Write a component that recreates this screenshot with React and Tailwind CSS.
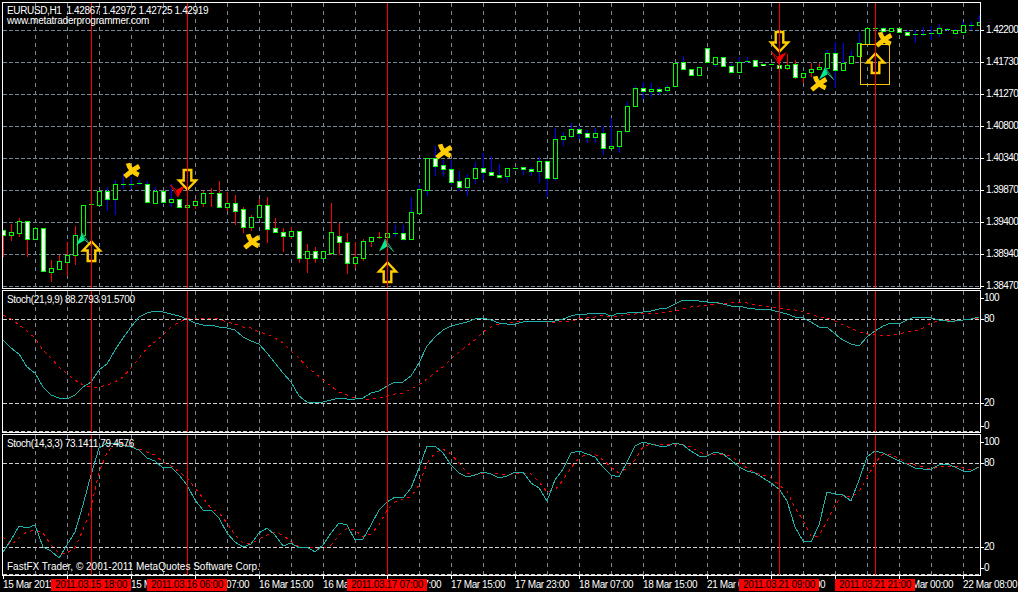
const K = [
[1,690,704,690,770],[0,697,704,672,722],[0,664,698,655,710],[1,664,716,664,770],[0,685,716],[1,685,812],[0,805,815,780,845],[0,784,806,765,808],[0,766,785,727,827],[0,706,766,678,795],
[0,616,706],[2,613,613],[0,574,614],[1,574,596,562,632],[0,553,596,540,644],[2,553,553,520,568],[2,551,551,530,566],[2,550,550,540,556],[1,553,605,543,607],[0,574,608,562,610],
[1,574,605,574,612],[0,596,605,553,622],[1,596,622],[0,616,622],[0,604,616,598,626],[0,580,608,574,622],[2,580,580,565,620],[1,580,620,544,625],[0,610,622,576,632],[1,610,632,586,674],
[1,628,682,622,698],[0,652,682,645,692],[0,616,652,598,655],[1,616,686,592,728],[1,685,697,655,700],[1,697,709,685,755],[0,694,709,682,716],[1,694,775,694,790],[0,754,775,732,820],[1,754,775,740,788],
[0,754,775,754,778],[0,697,759,610,765],[1,709,727,670,765],[1,727,790,700,822],[0,772,790,727,805],[0,724,775,717,783],[0,712,724,712,740],[2,710,710,697,716],[0,700,710],[2,700,700,675,710],
[1,700,716,675,722],[0,637,716,590,718],[0,568,638,555,640],[0,475,571,475,588],[1,475,499,438,528],[1,496,508,480,530],[1,508,547,480,555],[1,544,562,514,572],[0,535,562,522,588],[0,505,535,486,552],
[1,505,517,460,540],[1,517,526,468,528],[1,526,532,492,535],[0,505,529,505,548],[2,503,503],[1,502,508,502,525],[1,508,514,500,528],[0,484,514,470,548],[1,484,535,484,590],[0,418,535,385,542],
[0,409,418,396,438],[0,388,409,370,415],[1,388,400,378,416],[1,400,410,390,428],[0,400,410,385,428],[1,400,445,378,465],[0,439,445,353,445],[0,394,439,394,458],[0,319,394,306,395],[0,265,319,258,320],
[1,265,274,245,297],[0,268,274,250,290],[1,268,274,260,285],[0,260,271,255,275],[0,190,259],[1,187,208,168,210],[1,208,226],[0,202,226],[1,145,187],[0,172,192,172,200],
[1,172,199],[1,199,217,192,218],[0,187,217,170,220],[2,182,182,172,188],[1,181,197],[1,193,196],[2,193,193],[1,194,205],[0,194,205,162,210],[1,193,232,180,236],
[0,220,232,218,248],[0,208,217,190,230],[0,202,208,190,210],[0,160,204,150,208],[1,160,211,126,265],[0,190,211,130,212],[0,169,190,150,192],[0,130,169,100,170],[0,85,131,85,135],[2,83,83],
[1,83,92,80,100],[0,83,92],[1,83,95],[1,96,106,90,108],[2,103,103,90,128],[2,101,101,82,108],[2,100,100,78,120],[0,85,100,72,110],[2,86,86,85,92],[0,91,100,88,105],
[0,76,97,65,100],[2,74,74,66,90],[0,67,74,45,75],
];

const isRed = (k) => (k < 13) || (k >= 22 && k <= 48) || (k >= 97 && k <= 102);

const GX = Array.from({ length: 30 }, (_, i) => 35 + i * 32);
const REDX = [91, 187, 387, 779, 875];

const s2a = "10,165 34,190 58,208 82,245 106,265 130,305 154,330 178,340 202,341 226,330 250,305 274,290 298,255 322,238 346,195 370,160 394,125 418,95 442,83 466,79 490,80 514,86 538,92 562,103 586,115 610,119 634,121 658,125 682,130 706,135 730,155 754,168 778,178 802,205 826,235 850,265 874,290 898,333 922,352 946,353 970,352 994,345 1018,340";
const s2b = "22,343 46,343 70,340 94,325 118,318 142,303 166,292 190,292 214,272 238,235 262,183 286,155 310,135 334,122 358,118 382,112 406,101 430,100 454,105 478,115 502,118 526,117 550,112 574,109 598,107 622,112 646,108 670,103 694,92 718,88 742,88 766,85 790,85 814,93 838,85 862,85 886,82 910,82 934,78 958,73 982,70 1006,57";
const s2c = "16,46 40,46 64,48 88,52 112,52 136,57 160,62 184,64 208,70 232,73 256,73 280,75 304,82 328,87 352,95 376,100 400,112 424,127 448,127 472,148 496,165 520,177 544,184 568,155 592,138 616,123 640,113 664,118 688,105 712,97 736,97 760,100 784,105 808,107 832,109 856,105 880,103 904,95";
const r2a = "10,90 34,103 58,120 82,138 106,160 130,195 154,220 178,245 202,268 226,285 250,300 274,306 298,307 322,300 346,290 370,275 394,250 418,220 442,190 466,170 490,150 514,125 538,110 562,101 586,98 610,98 634,99 658,103 682,110 706,118 730,125 754,130 778,140 802,147 826,158 850,175 874,198 898,220 922,245 946,265 970,285 994,303 1018,320";
const r2b = "22,330 46,340 70,343 94,343 118,338 142,333 166,327 190,323 214,313 238,300 262,282 286,265 310,245 334,222 358,200 382,183 406,165 430,140 454,127 478,116 502,115 526,112 550,109 574,108 598,109 622,110 646,112 670,108 694,107 718,103 742,100 766,97 790,90 814,95 838,92 862,88 886,86 910,85 934,87 958,85 982,82 1006,78";
const r2c = "16,73 40,65 64,62 88,60 112,57 136,55 160,53 184,52 208,55 232,60 256,63 280,66 304,70 328,73 352,76 376,80 400,88 424,95 448,100 472,108 496,120 520,130 544,140 568,147 592,147 616,152 640,150 664,148 688,140 712,137 736,128 760,115 784,108 808,105 832,106 856,104 880,103 904,100";

const s3a = "10,365 34,330 58,288 82,293 106,286 130,352 154,363 178,385 202,345 226,305 250,225 274,135 298,55 322,40 346,38 370,45 394,50 418,60 442,85 466,93 490,115 514,112 538,135 562,165 586,210 610,240 634,240 658,265 682,310 706,335 730,350 754,342 778,308 802,295 826,315 850,348 874,340 898,355 922,350 946,367 970,345 994,310 1018,280";
const s3b = "22,285 46,330 70,327 94,285 118,240 142,215 166,202 190,205 214,175 238,115 262,47 286,47 310,70 334,105 358,130 382,142 406,135 430,127 454,133 478,145 502,137 526,127 550,127 574,158 598,175 622,212 646,150 670,118 694,68 718,63 742,72 766,80 790,110 814,135 838,140 862,95 886,47 910,37 934,42 958,48 982,47 1006,38";
const s3c = "16,45 40,62 64,78 88,78 112,65 136,72 160,90 184,112 208,123 232,130 256,145 280,158 304,178 328,212 352,292 376,333 400,337 424,285 448,187 472,192 496,195 520,212 544,150 568,80 592,64 616,68 640,80 664,92 688,103 712,115 736,118 760,117 784,105 808,103 832,112 856,122 880,123 904,112";
const r3a = "10,322 34,345 58,325 82,305 106,300 130,310 154,345 178,370 202,370 226,355 250,300 274,235 298,125 322,70 346,40 370,40 394,50 418,58 442,65 466,75 490,95 514,108 538,125 562,145 586,175 610,205 634,235 658,250 682,280 706,315 730,340 754,342 778,328 802,315 826,305 850,315 874,335 898,350 922,352 946,355 970,355 994,345 1018,315";
const r3b = "22,295 46,300 70,320 94,312 118,285 142,240 166,215 190,208 214,200 238,165 262,100 286,70 310,57 334,72 358,100 382,128 406,135 430,130 454,130 478,133 502,135 526,133 550,130 574,132 598,155 622,185 646,180 670,150 694,115 718,85 742,72 766,72 790,90 814,110 838,130 862,115 886,90 910,50 934,42 958,42 982,42 1006,42";
const r3c = "16,43 40,50 64,65 88,75 112,72 136,72 160,78 184,95 208,115 232,128 256,135 280,145 304,165 328,182 352,235 376,270 400,317 424,318 448,272 472,225 496,195 520,200 544,185 568,143 592,100 616,72 640,75 664,85 688,98 712,105 736,110 760,118 784,112 808,107 832,107 856,113 880,120 904,112";

const map = (str, ox, oy) =>
  str.split(" ").map((p) => {
    const [a, b] = p.split(",").map(Number);
    return `${ox + Math.round(a / 3)},${oy + Math.round(b / 3)}`;
  }).join(" ");

const join3 = (a, b, c, oy) => `${map(a, 0, oy)} ${map(b, 340, oy)} ${map(c, 678, oy)}`;

function Grid({ top, bottom, hs, hColor }) {
  return (
    <g shapeRendering="crispEdges">
      {GX.map((x) => (
        <line key={x} x1={x + 0.5} x2={x + 0.5} y1={top} y2={bottom} stroke="#778899" strokeDasharray="4 4" />
      ))}
      {hs.map((y) => (
        <line key={y} x1={3} x2={979} y1={y + 0.5} y2={y + 0.5} stroke={hColor} strokeDasharray="4 2" />
      ))}
    </g>
  );
}

function RedLines({ top, bottom }) {
  return (
    <g shapeRendering="crispEdges">
      {REDX.map((x) => (
        <rect key={x} x={x} y={top} width={1} height={bottom - top} fill="#ff0000" />
      ))}
    </g>
  );
}

function Candle({ d, k }) {
  const [t, a, b, c, e] = d;
  const cx = 3 + 8 * k;
  const top = Math.round(a / 3);
  const bot = Math.max(Math.round(b / 3), top + 1);
  const wt = c !== undefined ? Math.round(c / 3) : top;
  const wb = e !== undefined ? Math.round(e / 3) : bot;
  return (
    <g shapeRendering="crispEdges">
      {wb > wt && <rect x={cx} y={wt} width={1} height={wb - wt} fill={isRed(k) ? "#ff0000" : "#0000ff"} />}
      {t === 2 ? (
        <rect x={cx - 2} y={top} width={5} height={1} fill="#00ff00" />
      ) : (
        <>
          <rect x={cx - 2} y={top} width={5} height={bot - top + 1} fill="#00ff00" />
          <rect x={cx - 1} y={top + 1} width={3} height={Math.max(bot - top - 1, 1)} fill={t === 1 ? "#ffffff" : "#000000"} />
        </>
      )}
    </g>
  );
}

function UpArrow({ x, y }) {
  return (
    <path transform={`translate(${x + 0.5} ${y})`} d="M0 1.5 L8.5 10.5 L3.8 10.5 L3.8 21 L-3.8 21 L-3.8 10.5 L-8.5 10.5 Z" fill="none" stroke="#ffcc00" strokeWidth="2.4" strokeLinejoin="miter" />
  );
}

function DownArrow({ x, y }) {
  return (
    <path transform={`translate(${x + 0.5} ${y})`} d="M0 20.5 L8.5 11.5 L3.8 11.5 L3.8 1 L-3.8 1 L-3.8 11.5 L-8.5 11.5 Z" fill="none" stroke="#ffcc00" strokeWidth="2.4" strokeLinejoin="miter" />
  );
}

function Cross({ x, y }) {
  return (
    <g transform={`translate(${x} ${y}) scale(1.12)`} fill="none" stroke="#ffcc00" strokeWidth="4.2">
      <path d="M-3.5 -6 C-2.5 -2 0 2 6 4.5" />
      <path d="M-6.5 6 C-3 3 2 -1 6.5 -3.5" />
    </g>
  );
}

function GreenArrow({ x, y }) {
  return (
    <g transform={`translate(${x} ${y})`}>
      <path d="M0 0 L-6 12.5 L3 7 Z" fill="#00ec8c" />
      <path d="M0 0 L8.5 12.5 L3 7 Z" fill="#000000" stroke="#1fa878" strokeWidth="1" />
    </g>
  );
}

function RedArrow({ x, y }) {
  return (
    <g transform={`translate(${x} ${y})`}>
      <path d="M0 0 L-2 -7 L7.5 -12 Z" fill="#ff0000" />
      <path d="M0 0 L-2 -7 L-7.5 -12 Z" fill="#000000" stroke="#e00000" strokeWidth="1" />
    </g>
  );
}

function AxisTick({ children, className }) {
  return (
    <div className={`flex items-center h-3 tracking-[-0.5px] ${className}`}>
      <span className="w-[3px] h-px bg-white shrink-0" />
      <span className="whitespace-nowrap">{children}</span>
    </div>
  );
}

const PRICES = ["1.42200", "1.41730", "1.41270", "1.40800", "1.40340", "1.39870", "1.39400", "1.38940", "1.38470"];
const TIMES = ["15 Mar 2011", "15 Mar 15:00", "15 Mar 23:00", "16 Mar 07:00", "16 Mar 15:00", "16 Mar 23:00", "17 Mar 07:00", "17 Mar 15:00", "17 Mar 23:00", "18 Mar 07:00", "18 Mar 15:00", "21 Mar 00:00", "21 Mar 08:00", "21 Mar 16:00", "22 Mar 00:00", "22 Mar 08:00"];

function RedLabel({ className, children }) {
  return (
    <div className={`absolute top-[3px] w-20 h-3 bg-[#ff0000] text-black tracking-[-0.33px] flex items-center justify-center whitespace-nowrap ${className}`}>
      {children}
    </div>
  );
}

export default function App() {
  return (
    <div className="w-[1018px] h-[592px] bg-black text-white overflow-hidden flex flex-col pt-[2px] font-['Liberation_Sans',sans-serif] text-[10px] leading-3">
      {/* Main price chart */}
      <div className="flex h-[287px] shrink-0">
        <div className="relative ml-[2px] w-[979px] h-full border border-white shrink-0">
          <svg width="977" height="285" viewBox="3 3 977 285" className="block">
            <Grid top={3} bottom={288} hs={[30, 62, 94, 126, 158, 190, 222, 254, 286]} hColor="#778899" />
            {K.map((d, k) => <Candle key={k} d={d} k={k} />)}
            <GreenArrow x={82} y={233} />
            <GreenArrow x={385} y={239} />
            <GreenArrow x={825} y={67} />
            <RedArrow x={178} y={197} />
            <RedArrow x={779} y={64} />
            <UpArrow x={91} y={240} />
            <DownArrow x={187} y={169} />
            <UpArrow x={387} y={261} />
            <DownArrow x={779} y={31} />
            <UpArrow x={875} y={52} />
            <rect x={860.5} y={44.5} width={29} height={40} fill="none" stroke="#ffc400" shapeRendering="crispEdges" />
            <Cross x={132} y={170} />
            <Cross x={252} y={241} />
            <Cross x={444} y={151} />
            <Cross x={819} y={83} />
            <Cross x={884} y={39} />
            <RedLines top={3} bottom={288} />
          </svg>
          <div className="absolute left-1 top-[2px] flex flex-col">
            <span className="whitespace-pre tracking-[-0.36px]">EURUSD,H1  1.42867 1.42972 1.42725 1.42919</span>
            <span className="mt-[-2px] tracking-[-0.2px]">www.metatraderprogrammer.com</span>
          </div>
        </div>
        <div className="pt-3 h-full">
          {PRICES.map((p) => (
            <div key={p} className="flex items-center h-8 w-[37px] tracking-[-0.55px]">
              <span className="w-[3px] h-px bg-white shrink-0" />
              <span className="ml-[2px] whitespace-nowrap">{p}</span>
            </div>
          ))}
        </div>
      </div>

      {/* Stoch 21 */}
      <div className="flex h-[143px] mt-px shrink-0">
        <div className="relative ml-[2px] w-[979px] h-full border border-white shrink-0">
          <svg width="977" height="141" viewBox="3 291 977 141" className="block">
            <Grid top={291} bottom={432} hs={[319, 403, 431]} hColor="#d0d0d0" />
            <polyline points={join3(r2a, r2b, r2c, 285)} fill="none" stroke="#ff0000" strokeDasharray="3 4" shapeRendering="crispEdges" />
            <polyline points={join3(s2a, s2b, s2c, 285)} fill="none" stroke="#20b2aa" shapeRendering="crispEdges" />
            <RedLines top={291} bottom={432} />
          </svg>
          <span className="absolute left-1 top-[3px] whitespace-nowrap tracking-[-0.35px]">Stoch(21,9,9) 88.2793 91.5700</span>
        </div>
        <div className="flex flex-col">
          <AxisTick className="mt-[2px]">100</AxisTick>
          <AxisTick className="mt-[9px]">80</AxisTick>
          <AxisTick className="mt-[72px]">20</AxisTick>
          <AxisTick className="mt-[11px]">0</AxisTick>
        </div>
      </div>

      {/* Stoch 14 */}
      <div className="flex h-[142px] mt-px shrink-0">
        <div className="relative ml-[2px] w-[979px] h-full border border-white shrink-0">
          <svg width="977" height="140" viewBox="3 435 977 140" className="block">
            <Grid top={435} bottom={575} hs={[463, 547, 574]} hColor="#d0d0d0" />
            <polyline points={join3(r3a, r3b, r3c, 430)} fill="none" stroke="#ff0000" strokeDasharray="3 4" shapeRendering="crispEdges" />
            <polyline points={join3(s3a, s3b, s3c, 430)} fill="none" stroke="#20b2aa" shapeRendering="crispEdges" />
            <RedLines top={435} bottom={575} />
          </svg>
          <span className="absolute left-1 top-[3px] whitespace-nowrap tracking-[-0.35px]">Stoch(14,3,3) 73.1411 79.4576</span>
          <span className="absolute left-1 bottom-[2px] whitespace-nowrap">FastFX Trader, © 2001-2011 MetaQuotes Software Corp.</span>
        </div>
        <div className="flex flex-col">
          <AxisTick className="mt-[2px]">100</AxisTick>
          <AxisTick className="mt-[9px]">80</AxisTick>
          <AxisTick className="mt-[72px]">20</AxisTick>
          <AxisTick className="mt-[9px]">0</AxisTick>
        </div>
      </div>

      {/* Time axis */}
      <div className="relative flex pl-[3px] h-4 shrink-0 tracking-[-0.4px]">
        {TIMES.map((t) => (
          <div key={t} className="w-16 shrink-0 flex flex-col items-start">
            <span className="w-px h-[3px] bg-white" />
            <span className="whitespace-nowrap">{t}</span>
          </div>
        ))}
        <RedLabel className="left-[51px]">2011.03.15 18:00</RedLabel>
        <RedLabel className="left-[147px]">2011.03.16 06:00</RedLabel>
        <RedLabel className="left-[347px]">2011.03.17 07:00</RedLabel>
        <RedLabel className="left-[739px]">2011.03.21 09:00</RedLabel>
        <RedLabel className="left-[835px]">2011.03.21 21:00</RedLabel>
      </div>
    </div>
  );
}
